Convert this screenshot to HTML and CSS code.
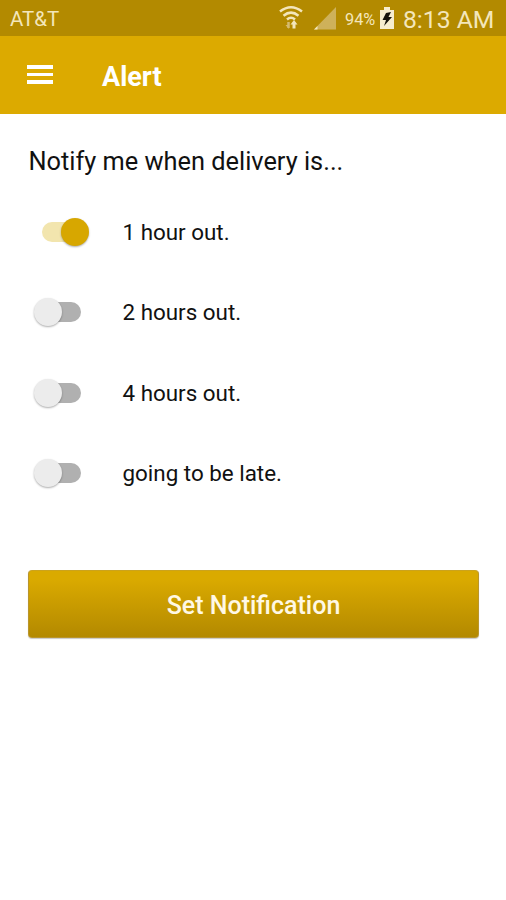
FILE: index.html
```html
<!DOCTYPE html>
<html lang="en">
<head>
<meta charset="utf-8">
<title>Alert</title>
<link rel="stylesheet" href="styles.css">
</head>
<body>
<div class="status">
  <span class="carrier">AT&amp;T</span>
  <svg class="wifi" width="24" height="26" viewBox="0 0 24 26" fill="none" stroke="#f3e6bb" stroke-width="2.500">
    <path d="M1 6.500Q12-2 23 6.500M4.500 10.700Q12 4.500 19.500 10.700M8 14.500Q12 11 16 14.500"/>
    <path d="M9.500 17v6" stroke="#d5bb70" stroke-width="2.500"/>
    <path d="M6.500 20 10 24V20z" fill="#d5bb70" stroke="none"/>
    <path d="M15 23.500v-6" stroke-width="3"/>
    <path d="M11.500 19.500 15 15 18.500 19.500z" fill="#f3e6bb" stroke="none"/>
  </svg>
  <svg class="signal" width="22" height="23" viewBox="0 0 22 23">
    <path d="M0 22.500 22 0v22.500z" fill="#ceb15a"/>
    <path d="M0 22.500 3.500 18.900v3.600z" fill="#f3e6bb"/>
  </svg>
  <span class="percent">94%</span>
  <svg class="battery" width="14" height="22" viewBox="0 0 14 22">
    <path d="M4 0h6v3h4v19H0V3h4z" fill="#f6edcf"/>
    <path d="M6 6 11 5 8.500 10H12L4 19 6 13H2.500z" fill="#15120a"/>
  </svg>
  <span class="clock">8:13 AM</span>
</div>
<header class="appbar">
  <div class="menu"><i></i><i></i><i></i></div>
  <h1 class="title">Alert</h1>
</header>
<main class="content">
  <h2 class="prompt">Notify me when delivery is...</h2>
  <div class="options">
    <div class="option"><span class="switch on"><span class="thumb"></span></span><span class="label">1 hour out.</span></div>
    <div class="option"><span class="switch"><span class="thumb"></span></span><span class="label">2 hours out.</span></div>
    <div class="option"><span class="switch"><span class="thumb"></span></span><span class="label">4 hours out.</span></div>
    <div class="option"><span class="switch"><span class="thumb"></span></span><span class="label">going to be late.</span></div>
  </div>
  <button class="submit">Set Notification</button>
</main>
</body>
</html>
```
FILE: styles.css
```css
* { box-sizing: border-box; }
body {
  margin: 0;
  height: 900px;
  overflow: hidden;
  background: #fff;
  color: #111;
  font-family: Roboto, "Liberation Sans", sans-serif;
  white-space: nowrap;
}
.status {
  display: flex;
  align-items: center;
  height: 36px;
  padding: 0 11px 0 10px;
  background: #b38a00;
  color: #f3e6bb;
}
.carrier { font-size: 20.500px; margin-right: auto; padding-top: 2px; }
.wifi { margin-right: 11px; }
.signal { margin-right: 9px; }
.percent { width: 31px; margin-right: 4px; font-size: 16.300px; padding-top: 2px; }
.battery { margin-right: 9px; }
.clock { width: 92px; font-size: 24.700px; padding-top: 3px; }
.appbar {
  display: flex;
  align-items: center;
  height: 78px;
  padding-left: 27px;
  background: #dcaa00;
  color: #fff;
}
.menu { display: flex; flex-direction: column; gap: 4px; width: 26px; margin-bottom: 1px; }
.menu i { height: 3.500px; background: #fff; }
.title { margin: 3px 0 0 49px; font-size: 27px; font-weight: 700; }
.content { padding: 31px 28px 0; }
.prompt { margin: 0; padding-left: .5px; font-size: 25.350px; font-weight: 400; line-height: 32px; }
.options { display: grid; grid-template-rows: repeat(4, 80.3px); margin-top: 15px; }
.option { display: flex; align-items: center; }
.switch {
  position: relative;
  width: 41px;
  height: 20px;
  margin: 0 41px 0 12px;
  border-radius: 10px;
  background: #b0b0b0;
}
.thumb {
  position: absolute;
  left: -6px;
  top: -4px;
  width: 28px;
  height: 28px;
  border-radius: 50%;
  background: #ececec;
  box-shadow: 0 1px 2px rgba(0, 0, 0, .32);
}
.on { margin: 0 39px 0 14px; background: #f2e5ae; }
.on .thumb { left: 19px; background: #d7a700; }
.label { padding-left: .5px; font-size: 22.400px; }
.submit {
  display: block;
  width: 451px;
  height: 68px;
  margin-top: 57px;
  padding: 2px 0 0;
  border: 1px solid #b9952c;
  border-top-color: #cba31d;
  border-radius: 4px;
  background: linear-gradient(#daaa00 12%, #b38900);
  box-shadow: 0 1px 1px rgba(0, 0, 0, .22);
  color: #fff8e5;
  font: 500 25px Roboto, "Liberation Sans", sans-serif;
}
```
